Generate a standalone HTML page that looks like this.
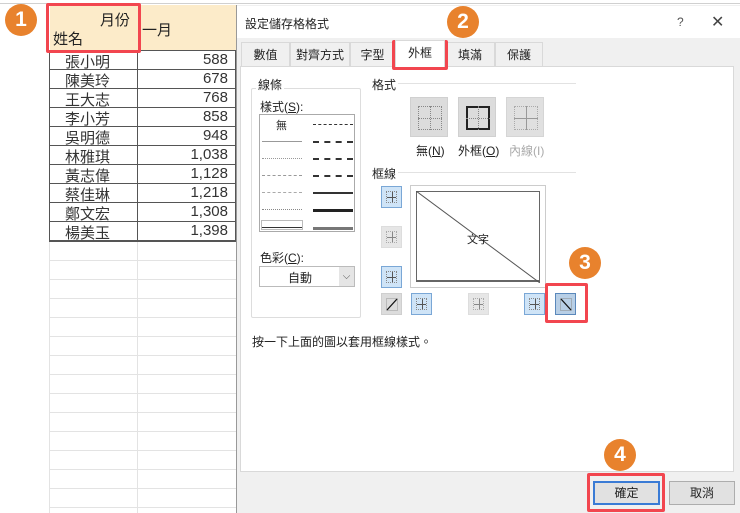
<!DOCTYPE html><html><head><meta charset="utf-8"><style>
*{margin:0;padding:0;box-sizing:border-box}
body{width:740px;height:513px;overflow:hidden;background:#fff;position:relative;font-family:"Liberation Sans","Noto Sans CJK TC",sans-serif;color:#222}
.a{position:absolute}
.t{font-size:12px;white-space:nowrap}
.c{position:absolute;border-radius:50%;background:#e8822d;color:#fff;font-size:21px;font-weight:bold;text-align:center}
.r{position:absolute;border:3px solid #f2464f;border-radius:2px}
.tab{position:absolute;top:42px;height:24px;font-size:12px;text-align:center;line-height:24px;border:1px solid #d9d9d9;border-bottom:none;background:#f0f0f0}
.ib{position:absolute;width:21px;height:22px;background:#dcdcdc;border:1px solid #cfcfcf}
.ib.s{background:#cfe4f7;border:1px solid #7aa7d6}
.ib i{position:absolute;left:4px;top:4px;width:11px;height:12px;border:1px dotted #888}
.ib i:before{content:"";position:absolute;left:5px;top:0;bottom:0;border-left:1px solid #555}
.ib i:after{content:"";position:absolute;top:5px;left:0;right:0;border-top:1px solid #555}
.ln{position:absolute;height:0}
</style></head><body>
<div class="a" style="left:0;top:0;width:236px;height:513px;background:#fff"></div>
<div class="a" style="left:50px;top:5px;width:186px;height:46px;background:#fcebc9"></div>
<div class="a" style="left:0;top:3px;width:740px;border-top:1px solid #d0d0d0"></div>
<div class="a t" style="left:100px;top:9px;font-size:15px">月份</div>
<div class="a t" style="left:53px;top:28px;font-size:15px">姓名</div>
<div class="a t" style="left:142px;top:19px;font-size:15px">一月</div>
<div class="a" style="left:49px;top:50px;width:187px;height:192px;border:1px solid #555"></div>
<div class="a" style="left:137px;top:50px;height:192px;border-left:1px solid #555"></div>
<div id="rows"></div>
<script>
var n=["張小明","陳美玲","王大志","李小芳","吳明德","林雅琪","黃志偉","蔡佳琳","鄭文宏","楊美玉"],v=["588","678","768","858","948","1,038","1,128","1,218","1,308","1,398"],h="";
for(var i=0;i<10;i++){var y=51+i*19;h+='<div class="a" style="left:49px;top:'+(y+18)+'px;width:187px;border-top:1px solid #555"></div><div class="a t" style="left:65px;top:'+y+'px;font-size:15px;color:#333">'+n[i]+'</div><div class="a t" style="left:140px;width:88px;text-align:right;top:'+y+'px;font-size:15px;color:#333">'+v[i]+'</div>';}
for(var j=0;j<14;j++){var y2=260+j*19;h+='<div class="a" style="left:49px;top:'+y2+'px;width:187px;border-top:1px solid #e3e3e3"></div>';}
h+='<div class="a" style="left:49px;top:242px;height:271px;border-left:1px solid #e3e3e3"></div><div class="a" style="left:137px;top:242px;height:271px;border-left:1px solid #e3e3e3"></div>';
document.getElementById("rows").innerHTML=h;
</script>
<div class="a" style="left:236px;top:5px;width:504px;height:508px;background:#f0f0f0;border-left:1px solid #999"></div>
<div class="a" style="left:237px;top:6px;width:503px;height:32px;background:#fff"></div>
<div class="a t" style="left:245px;top:15px">設定儲存格格式</div>
<div class="a t" style="left:677px;top:15px;color:#555">?</div>
<div class="a t" style="left:711px;top:12px;font-size:16px;color:#444">✕</div>
<div class="tab" style="left:241px;width:49px">數值</div>
<div class="tab" style="left:290px;width:60px">對齊方式</div>
<div class="tab" style="left:350px;width:45px">字型</div>
<div class="tab" style="left:395px;width:50px;background:#fff;top:40px;height:27px;z-index:2">外框</div>
<div class="tab" style="left:445px;width:50px">填滿</div>
<div class="tab" style="left:495px;width:48px">保護</div>
<div class="a" style="left:240px;top:66px;width:494px;height:406px;background:#fff;border:1px solid #d9d9d9"></div>
<div class="a" style="left:251px;top:88px;width:110px;height:230px;border:1px solid #ddd;border-radius:2px"></div>
<div class="a t" style="left:256px;top:76px;background:#fff;padding:0 2px">線條</div>
<div class="a t" style="left:260px;top:98px">樣式(<u>S</u>):</div>
<div class="a" style="left:259px;top:114px;width:96px;height:118px;border:1px solid #aaa;background:#fff"></div>
<div class="a t" style="left:276px;top:117px;font-size:11px">無</div>
<div class="ln" style="left:262px;top:141px;width:40px;border-top:1px solid #999"></div>
<div class="ln" style="left:262px;top:158px;width:40px;border-top:1px dotted #999"></div>
<div class="ln" style="left:262px;top:175px;width:40px;border-top:1px dashed #999"></div>
<div class="ln" style="left:262px;top:192px;width:40px;border-top:1px dashed #aaa"></div>
<div class="ln" style="left:262px;top:209px;width:40px;border-top:1px dotted #888"></div>
<div class="a" style="left:261px;top:220px;width:42px;height:10px;border:1px solid #bbb"></div>
<div class="ln" style="left:262px;top:227px;width:40px;border-top:1px solid #333"></div>
<div class="ln" style="left:313px;top:124px;width:40px;border-top:1px dashed #333"></div>
<div class="ln" style="left:313px;top:141px;width:40px;border-top:2px dashed #333"></div>
<div class="ln" style="left:313px;top:158px;width:40px;border-top:2px dashed #333"></div>
<div class="ln" style="left:313px;top:175px;width:40px;border-top:2px dashed #333"></div>
<div class="ln" style="left:313px;top:192px;width:40px;border-top:2px solid #333"></div>
<div class="ln" style="left:313px;top:209px;width:40px;border-top:3px solid #222"></div>
<div class="ln" style="left:313px;top:227px;width:40px;border-top:3px solid #777"></div>
<div class="a t" style="left:260px;top:249px">色彩(<u>C</u>):</div>
<div class="a" style="left:259px;top:266px;width:96px;height:21px;border:1px solid #bbb;background:#fff"></div>
<div class="a" style="left:339px;top:267px;width:15px;height:19px;background:#e5e5e5;font-size:10px;text-align:center;line-height:19px;color:#555">⌵</div>
<div class="a t" style="left:288px;top:269px">自動</div>
<div class="a t" style="left:372px;top:76px">格式</div>
<div class="ln" style="left:398px;top:83px;width:178px;border-top:1px solid #e2e2e2"></div>
<div class="a" style="left:410px;top:97px;width:38px;height:40px;background:#dcdcdc;border:1px solid #d0d0d0"><div class="a" style="left:7px;top:8px;width:24px;height:24px;border:1px dotted #888"></div><div class="a" style="left:19px;top:8px;height:24px;border-left:1px dotted #888"></div><div class="a" style="left:7px;top:20px;width:24px;border-top:1px dotted #888"></div></div>
<div class="a" style="left:458px;top:97px;width:38px;height:40px;background:#dcdcdc;border:1px solid #d0d0d0"><div class="a" style="left:7px;top:8px;width:24px;height:24px;border:2px solid #222"></div><div class="a" style="left:19px;top:8px;height:24px;border-left:1px dotted #888"></div><div class="a" style="left:7px;top:20px;width:24px;border-top:1px dotted #888"></div></div>
<div class="a" style="left:506px;top:97px;width:38px;height:40px;background:#e0e0e0;border:1px solid #d5d5d5"><div class="a" style="left:7px;top:8px;width:24px;height:24px;border:1px dotted #aaa"></div><div class="a" style="left:19px;top:8px;height:24px;border-left:1px solid #999"></div><div class="a" style="left:7px;top:20px;width:24px;border-top:1px solid #999"></div></div>
<div class="a t" style="left:416px;top:142px">無(<u>N</u>)</div>
<div class="a t" style="left:458px;top:142px">外框(<u>O</u>)</div>
<div class="a t" style="left:509px;top:142px;color:#aaa">內線(I)</div>
<div class="a t" style="left:372px;top:165px">框線</div>
<div class="ln" style="left:398px;top:172px;width:178px;border-top:1px solid #e2e2e2"></div>
<div class="a" style="left:410px;top:185px;width:136px;height:103px;border:1px solid #ccc;background:#fff"></div>
<div class="a" style="left:416px;top:191px;width:124px;height:91px;border:1px solid #666;border-bottom:2px solid #666"></div>
<svg class="a" style="left:416px;top:191px" width="124" height="92"><line x1="0" y1="0" x2="124" y2="92" stroke="#555" stroke-width="1"/></svg>
<div class="a t" style="left:467px;top:231px;font-size:11px">文字</div>
<div class="ib s" style="left:381px;top:186px"><i></i></div>
<div class="ib" style="left:381px;top:226px;opacity:.7"><i></i></div>
<div class="ib s" style="left:381px;top:266px"><i></i></div>
<div class="ib" style="left:381px;top:293px"><svg class="a" style="left:4px;top:4px" width="12" height="13"><rect x=".5" y=".5" width="11" height="12" fill="none" stroke="#999" stroke-dasharray="1 1"/><line x1="1" y1="12" x2="11" y2="1" stroke="#111" stroke-width="1.3"/></svg></div>
<div class="ib s" style="left:411px;top:293px"><i></i></div>
<div class="ib" style="left:468px;top:293px;opacity:.7"><i></i></div>
<div class="ib s" style="left:524px;top:293px"><i></i></div>
<div class="ib s" style="left:555px;top:293px;background:#b8cfe6;border-color:#5a88bb"><svg class="a" style="left:4px;top:4px" width="12" height="13"><rect x=".5" y=".5" width="11" height="12" fill="none" stroke="#888" stroke-dasharray="1 1"/><line x1="1" y1="1" x2="11" y2="12" stroke="#111" stroke-width="1.3"/></svg></div>
<div class="a t" style="left:252px;top:333px">按一下上面的圖以套用框線樣式。</div>
<div class="a" style="left:593px;top:481px;width:67px;height:24px;background:#e1e1e1;border:2px solid #3a7bd5;font-size:12px;text-align:center;line-height:20px">確定</div>
<div class="a" style="left:669px;top:481px;width:66px;height:24px;background:#e1e1e1;border:1px solid #adadad;font-size:12px;text-align:center;line-height:22px">取消</div>
<div class="r" style="left:46px;top:3px;width:95px;height:50px"></div>
<div class="r" style="left:392px;top:40px;width:56px;height:30px"></div>
<div class="r" style="left:545px;top:283px;width:43px;height:40px"></div>
<div class="r" style="left:587px;top:473px;width:78px;height:39px"></div>
<div class="c" style="left:5px;top:4px;width:32px;height:32px;line-height:32px">1</div>
<div class="c" style="left:447px;top:6px;width:32px;height:32px;line-height:32px">2</div>
<div class="c" style="left:569px;top:247px;width:32px;height:32px;line-height:32px">3</div>
<div class="c" style="left:604px;top:439px;width:32px;height:32px;line-height:32px">4</div>
</body></html>
